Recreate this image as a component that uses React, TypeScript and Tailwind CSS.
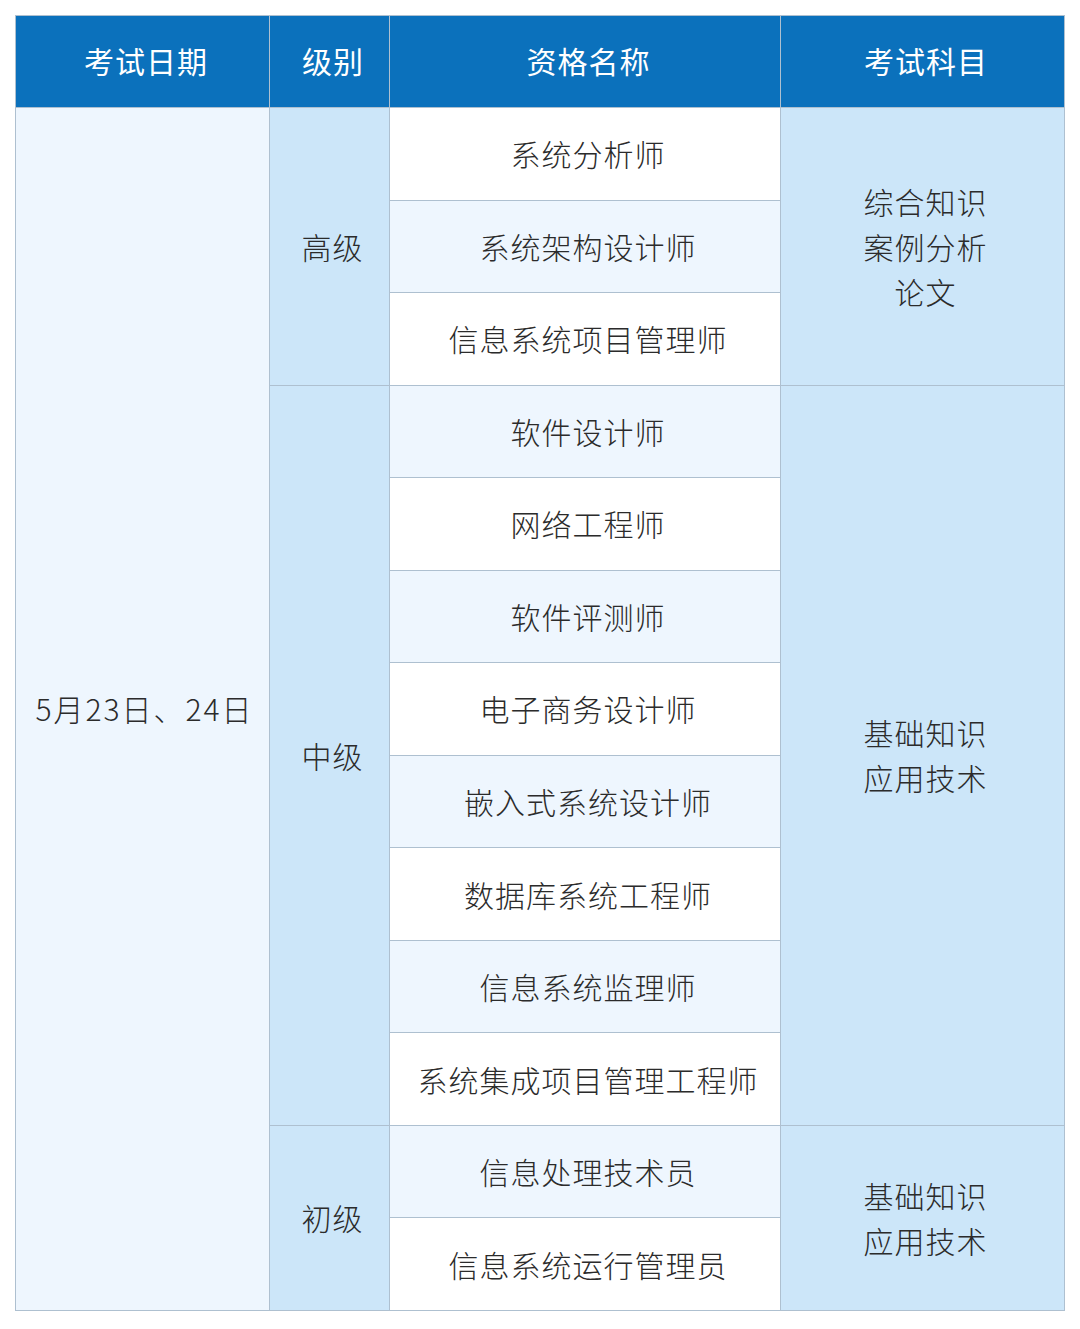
const names = [
  "系统分析师",
  "系统架构设计师",
  "信息系统项目管理师",
  "软件设计师",
  "网络工程师",
  "软件评测师",
  "电子商务设计师",
  "嵌入式系统设计师",
  "数据库系统工程师",
  "信息系统监理师",
  "系统集成项目管理工程师",
  "信息处理技术员",
  "信息系统运行管理员",
];

function NameCell({ text, index }: { text: string; index: number }) {
  return (
    <div
      className={
        "flex items-center justify-center pl-[6px] tracking-[1px] " +
        (index % 2 === 0 ? "bg-white" : "bg-[#eef6fe]")
      }
    >
      {text}
    </div>
  );
}

function Head({ children }: { children: string }) {
  return (
    <div className="flex items-center justify-center bg-[#0b71bc] pb-[2px] pl-[7px] font-normal tracking-[1px] text-white">
      {children}
    </div>
  );
}

export default function App() {
  const font = {
    fontFamily: '"Noto Sans CJK SC", "Noto Sans", sans-serif',
  };

  return (
    <div className="min-h-[1329px] bg-white pt-[15px] pl-[15px]" style={font}>
      <div className="grid h-[1296px] w-[1050px] grid-cols-[253px_119px_390px_283px] grid-rows-[91px_repeat(13,minmax(0,1fr))] gap-px border border-[#aec0d0] bg-[#aec0d0] text-[30px] font-light leading-[45px] text-[#2b2b2b]">
        <Head>考试日期</Head>
        <Head>级别</Head>
        <Head>资格名称</Head>
        <Head>考试科目</Head>

        <div className="row-span-13 flex items-center justify-center bg-[#eef6fe] pl-[4px] tracking-[2px]">
          5月23日、24日
        </div>

        <div className="row-span-3 flex items-center justify-center bg-[#cce6f9] pl-[6px] tracking-[1px]">
          高级
        </div>
        <NameCell text={names[0]} index={0} />
        <div className="row-span-3 flex flex-col items-center justify-center bg-[#cce6f9] pl-[6px] tracking-[1px]">
          <span>综合知识</span>
          <span>案例分析</span>
          <span>论文</span>
        </div>
        <NameCell text={names[1]} index={1} />
        <NameCell text={names[2]} index={2} />

        <div className="row-span-8 flex items-center justify-center bg-[#cce6f9] pl-[6px] tracking-[1px]">
          中级
        </div>
        <NameCell text={names[3]} index={3} />
        <div className="row-span-8 flex flex-col items-center justify-center bg-[#cce6f9] pl-[6px] tracking-[1px]">
          <span>基础知识</span>
          <span>应用技术</span>
        </div>
        {names.slice(4, 11).map((n, i) => (
          <NameCell key={n} text={n} index={i + 4} />
        ))}

        <div className="row-span-2 flex items-center justify-center bg-[#cce6f9] pl-[6px] tracking-[1px]">
          初级
        </div>
        <NameCell text={names[11]} index={11} />
        <div className="row-span-2 flex flex-col items-center justify-center bg-[#cce6f9] pl-[6px] tracking-[1px]">
          <span>基础知识</span>
          <span>应用技术</span>
        </div>
        <NameCell text={names[12]} index={12} />
      </div>
    </div>
  );
}
